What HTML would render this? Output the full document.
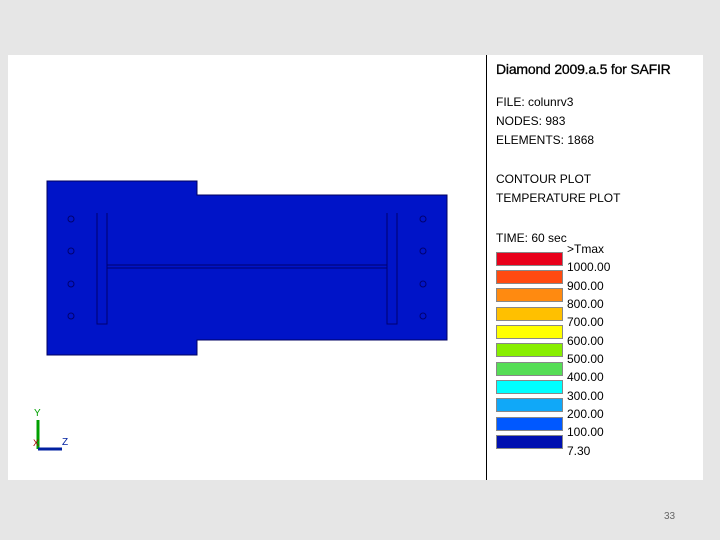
<!DOCTYPE html>
<html><head><style>
body{margin:0;width:720px;height:540px;background:#e6e6e6;position:relative;overflow:hidden;font-family:"Liberation Sans",sans-serif}
.p{position:absolute;left:8px;top:55px;width:695px;height:425px;background:#fff}
.t{position:absolute;font-size:12px;color:#000;white-space:nowrap}
.sw{position:absolute;left:496px;width:67px;height:14px;border:1px solid #888;box-sizing:border-box}
.l{position:absolute;left:567px;font-size:12px;color:#000}
</style></head><body>
<div class="p"></div>
<div style="position:absolute;left:486px;top:55px;width:1px;height:425px;background:#000"></div>
<div class="t" style="left:496px;top:61px;font-size:14px;letter-spacing:-0.2px;-webkit-text-stroke:0.3px #000">Diamond 2009.a.5 for SAFIR</div>
<div class="t" style="left:496px;top:95px">FILE: colunrv3</div>
<div class="t" style="left:496px;top:114px">NODES: 983</div>
<div class="t" style="left:496px;top:133px">ELEMENTS: 1868</div>
<div class="t" style="left:496px;top:172px">CONTOUR PLOT</div>
<div class="t" style="left:496px;top:191px">TEMPERATURE PLOT</div>
<div class="t" style="left:496px;top:231px">TIME: 60 sec</div>
<div class="l" style="top:242px">&gt;Tmax</div>
<div class="sw" style="top:252px;background:#e8001a"></div><div class="l" style="top:260px">1000.00</div>
<div class="sw" style="top:270px;background:#ff4a10"></div><div class="l" style="top:279px">900.00</div>
<div class="sw" style="top:288px;background:#ff8a10"></div><div class="l" style="top:297px">800.00</div>
<div class="sw" style="top:307px;background:#ffc000"></div><div class="l" style="top:315px">700.00</div>
<div class="sw" style="top:325px;background:#ffff00"></div><div class="l" style="top:334px">600.00</div>
<div class="sw" style="top:343px;background:#88ee00"></div><div class="l" style="top:352px">500.00</div>
<div class="sw" style="top:362px;background:#55dd55"></div><div class="l" style="top:370px">400.00</div>
<div class="sw" style="top:380px;background:#00ffff"></div><div class="l" style="top:389px">300.00</div>
<div class="sw" style="top:398px;background:#10a8f8"></div><div class="l" style="top:407px">200.00</div>
<div class="sw" style="top:417px;background:#0058ff"></div><div class="l" style="top:425px">100.00</div>
<div class="sw" style="top:435px;background:#0010b0"></div><div class="l" style="top:444px">7.30</div>
<svg style="position:absolute;left:0;top:0" width="720" height="540">
<path d="M47 181H197V195H447V340H197V355H47Z" fill="#0014c8" stroke="#000060" stroke-width="1"/>
<g fill="none" stroke="#000070" stroke-width="1">
<path d="M97 213V324H107V213M107 265H387M387 213V324H397V213M107 268H387"/>
<circle cx="71" cy="219" r="3"/><circle cx="71" cy="251" r="3"/><circle cx="71" cy="284" r="3"/><circle cx="71" cy="316" r="3"/>
<circle cx="423" cy="219" r="3"/><circle cx="423" cy="251" r="3"/><circle cx="423" cy="284" r="3"/><circle cx="423" cy="316" r="3"/>
</g>
<path d="M38 449V420" stroke="#00a000" stroke-width="3"/>
<path d="M38 449H62" stroke="#0020a0" stroke-width="3"/>
<text x="34" y="416" font-size="10" fill="#00a000" font-family="Liberation Sans">Y</text>
<text x="62" y="445" font-size="10" fill="#0020a0" font-family="Liberation Sans">Z</text>
<text x="33" y="446" font-size="9" fill="#a00000" font-family="Liberation Sans">X</text>
<text x="664" y="519" font-size="10" fill="#666" font-family="Liberation Sans">33</text>
</svg>
</body></html>
